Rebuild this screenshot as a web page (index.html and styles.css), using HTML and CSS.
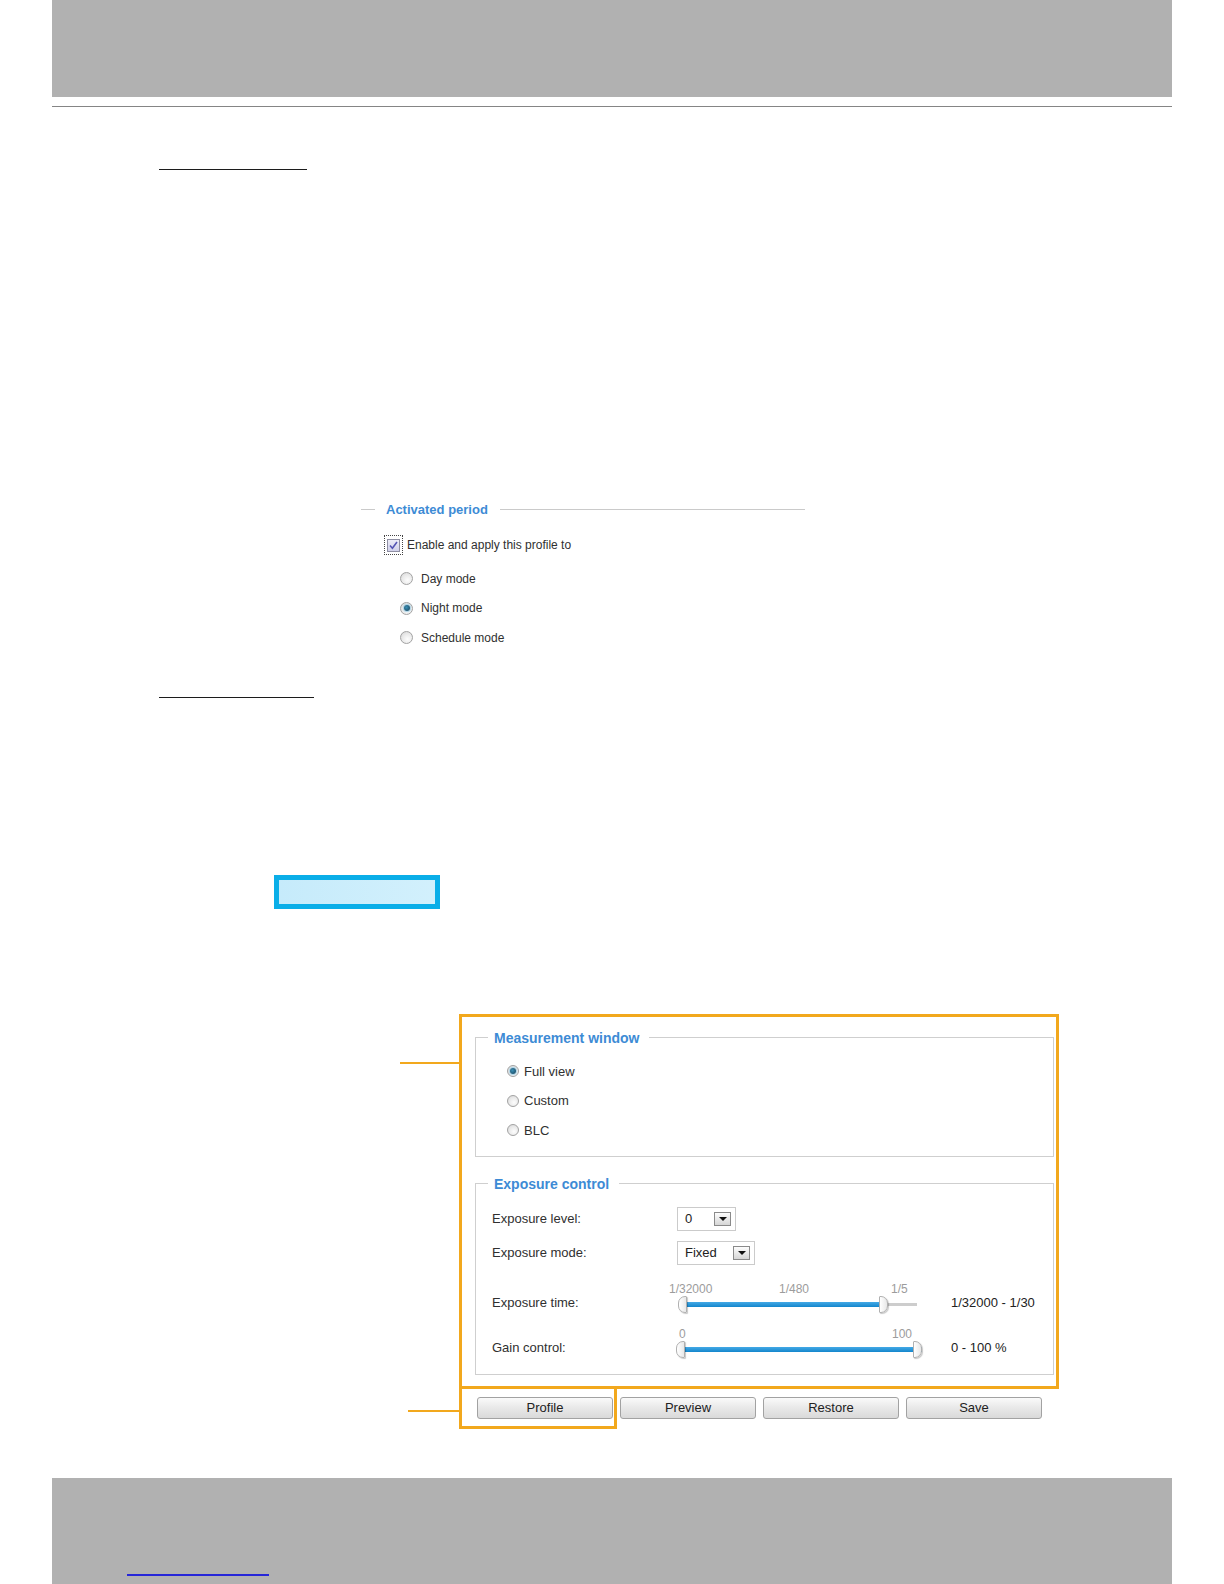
FILE: index.html
```html
<!DOCTYPE html>
<html lang="en">
<head>
    <meta charset="UTF-8">
    <title>Image Settings - Profile</title>
    <link rel="stylesheet" href="styles.css">
</head>
<body>
    <header class="page-head"></header>
    <div class="head-rule"></div>

    <div class="sec-line sec-line-a"></div>

    <section class="period">
        <div class="period-head"><span>Activated period</span></div>
        <div class="check-row">
            <span class="focus"><span class="check"><svg width="11" height="11" viewBox="0 0 11 11"><path d="M2 5.5 L4.4 8.2 L9 2" fill="none" stroke="#5454b4" stroke-width="1.6"/></svg></span></span>
            Enable and apply this profile to
        </div>
        <div class="opt"><span class="radio"></span>Day mode</div>
        <div class="opt"><span class="radio on"></span>Night mode</div>
        <div class="opt"><span class="radio"></span>Schedule mode</div>
    </section>

    <div class="sec-line sec-line-b"></div>

    <div class="note-box"></div>

    <div class="figure">
        <div class="panel">
            <div class="fs fs-window">
                <div class="fs-head"><span>Measurement window</span></div>
                <div class="fs-body">
                    <div class="opt"><span class="radio on"></span>Full view</div>
                    <div class="opt"><span class="radio"></span>Custom</div>
                    <div class="opt"><span class="radio"></span>BLC</div>
                </div>
            </div>
            <div class="fs fs-exposure">
                <div class="fs-head"><span>Exposure control</span></div>
                <div class="fs-body">
                    <div class="row row-level">
                        <span class="row-label">Exposure level:</span>
                        <span class="select select-level">0<span class="select-arrow"></span></span>
                    </div>
                    <div class="row row-mode">
                        <span class="row-label">Exposure mode:</span>
                        <span class="select select-mode">Fixed<span class="select-arrow"></span></span>
                    </div>
                    <div class="row row-slide row-time">
                        <span class="row-label">Exposure time:</span>
                        <div class="slider">
                            <div class="ticks">
                                <span style="left:0">1/32000</span>
                                <span style="left:110px">1/480</span>
                                <span style="left:222px">1/5</span>
                            </div>
                            <div class="rail">
                                <span class="rail-rest" style="left:212px;width:36px"></span>
                                <span class="rail-fill" style="left:13px;width:199px"></span>
                                <span class="handle handle-l" style="left:9px"></span>
                                <span class="handle handle-r" style="left:210px"></span>
                            </div>
                        </div>
                        <span class="row-value">1/32000 - 1/30</span>
                    </div>
                    <div class="row row-slide row-gain">
                        <span class="row-label">Gain control:</span>
                        <div class="slider">
                            <div class="ticks">
                                <span style="left:10px">0</span>
                                <span style="left:223px">100</span>
                            </div>
                            <div class="rail">
                                <span class="rail-fill" style="left:11px;width:242px"></span>
                                <span class="handle handle-l" style="left:7px"></span>
                                <span class="handle handle-r" style="left:244px"></span>
                            </div>
                        </div>
                        <span class="row-value">0 - 100 %</span>
                    </div>
                </div>
            </div>
        </div>
        <div class="btn-row">
            <div class="profile-mark"><button class="btn">Profile</button></div>
            <button class="btn btn-first">Preview</button>
            <button class="btn">Restore</button>
            <button class="btn">Save</button>
        </div>
    </div>

    <footer class="page-foot"><span class="foot-link"></span></footer>
</body>
</html>
```

FILE: styles.css
```css
body {
    margin: 0;
    background: #fff;
    color: #303030;
    font-family: 'Liberation Sans', Arial, sans-serif;
    font-size: 13px;
}
.page-head {
    height: 97px;
    margin: 0 52px;
    background: #b1b1b1;
}
.head-rule {
    height: 1px;
    margin: 9px 52px 0;
    background: #858585;
}
.sec-line {
    height: 0;
    margin-left: 159px;
    border-top: 1px solid #1c1c1c;
}
.sec-line-a {
    width: 148px;
    margin-top: 62px;
}
.sec-line-b {
    width: 155px;
    margin-top: 44px;
}

/* activated period */
.period {
    width: 444px;
    margin: 331px 0 0 361px;
    font-size: 12px;
}
.period-head {
    display: flex;
    align-items: center;
    height: 16px;
}
.period-head::before {
    content: '';
    width: 14px;
    height: 1px;
    background: #cacaca;
}
.period-head::after {
    content: '';
    flex: 1;
    height: 1px;
    background: #cacaca;
}
.period-head span {
    margin: 0 12px 0 11px;
    color: #3d8bd5;
    font-size: 13px;
    font-weight: bold;
}
.check-row {
    display: flex;
    align-items: center;
    height: 20px;
    margin: 18px 0 0 23px;
}
.focus {
    display: flex;
    align-items: center;
    justify-content: center;
    width: 17px;
    height: 18px;
    margin-right: 4px;
    border: 1px dotted #444;
}
.check {
    display: flex;
    align-items: center;
    justify-content: center;
    width: 11px;
    height: 11px;
    border: 1px solid #8e8ea2;
    background: linear-gradient(#ececf8, #d0d0ea);
}
.period .opt {
    height: 29.5px;
    margin-left: 39px;
}
.period .check-row + .opt {
    margin-top: 9px;
}
.period .radio {
    margin-right: 8px;
}
.opt {
    display: flex;
    align-items: center;
}
.radio {
    position: relative;
    box-sizing: border-box;
    width: 13px;
    height: 13px;
    border: 1px solid #a2a2a2;
    border-radius: 50%;
    background: radial-gradient(circle at 60% 65%, #fdfdfd 0, #e9e9e9 55%, #d2d2d2 100%);
}
.radio.on::after {
    content: '';
    position: absolute;
    left: 2.5px;
    top: 2.5px;
    width: 6px;
    height: 6px;
    border-radius: 50%;
    background: radial-gradient(circle at 40% 40%, #3b8fb5, #123f57);
    box-shadow: 0 0 1px 1px #a9d2e6;
}

.note-box {
    box-sizing: border-box;
    width: 166px;
    height: 34px;
    margin: 177px 0 0 274px;
    border: 5px solid #0aaee8;
    background: linear-gradient(90deg, #c6ebfb, #d2f0fc);
}

/* screenshot figure */
.figure {
    position: relative;
    width: 600px;
    margin: 105px 0 0 459px;
}
.figure::before,
.figure::after {
    content: '';
    position: absolute;
    height: 2px;
    background: #f2a81d;
}
.figure::before {
    left: -59px;
    top: 48px;
    width: 59px;
}
.figure::after {
    left: -51px;
    top: 396px;
    width: 51px;
}
.panel {
    display: flex;
    flex-direction: column;
    padding: 21px 2px 11px 13px;
    border: 3px solid #f2a81d;
}
.fs {
    display: flex;
    flex-direction: column;
    border: 1px solid #cfcfcf;
    border-top: 0;
}
.fs-exposure {
    margin-top: 27px;
}
.fs-head {
    display: flex;
    align-items: center;
    height: 20px;
    margin: -10px -1px 0;
}
.fs-head::before {
    content: '';
    width: 13px;
    height: 1px;
    background: #cfcfcf;
}
.fs-head::after {
    content: '';
    flex: 1;
    height: 1px;
    background: #cfcfcf;
}
.fs-head span {
    margin: 0 10px 0 6px;
    color: #3d8bd5;
    font-size: 14px;
    font-weight: bold;
}
.fs-window .fs-body {
    padding: 9px 0 10.5px 31px;
}
.fs-window .opt {
    height: 29.5px;
}
.fs-window .radio {
    width: 12px;
    height: 12px;
    margin-right: 5px;
}
.fs-window .radio.on::after {
    left: 2px;
    top: 2px;
}
.fs-exposure .fs-body {
    padding: 13px 0 17px 16px;
}
.row {
    display: flex;
    align-items: center;
}
.row-label {
    width: 177px;
    flex: none;
}
.row-mode {
    margin-top: 10px;
}
.select {
    box-sizing: border-box;
    display: flex;
    align-items: center;
    justify-content: space-between;
    height: 24px;
    margin-left: 8px;
    padding: 0 4px 0 7px;
    border: 1px solid #cbcbcb;
    background: #fff;
    color: #222;
}
.select-level {
    width: 59px;
}
.select-mode {
    width: 78px;
}
.select-arrow {
    display: flex;
    align-items: center;
    justify-content: center;
    width: 15px;
    height: 12px;
    border: 1px solid #8a8a8a;
    background: linear-gradient(#fdfdfd, #d6d6d6);
}
.select-arrow::after {
    content: '';
    border-left: 4px solid transparent;
    border-right: 4px solid transparent;
    border-top: 4px solid #111;
}
.row-slide {
    align-items: flex-end;
}
.row-time {
    margin-top: 17px;
}
.row-gain {
    margin-top: 15px;
}
.row-slide .row-label,
.row-value {
    line-height: 16px;
    margin-bottom: 1px;
}
.row-value {
    margin-left: 27px;
    color: #222;
}
.slider {
    width: 255px;
}
.ticks {
    position: relative;
    height: 14px;
    color: #9c9c9c;
    font-size: 12px;
    line-height: 14px;
}
.ticks span {
    position: absolute;
    top: 0;
}
.rail {
    position: relative;
    height: 16px;
}
.rail-fill,
.rail-rest {
    position: absolute;
}
.rail-fill {
    top: 6px;
    height: 5px;
    background: linear-gradient(#43a9e6, #1486cc);
}
.rail-rest {
    top: 7px;
    height: 3px;
    background: #cdcdcd;
}
.handle {
    position: absolute;
    top: 0;
    box-sizing: border-box;
    width: 9px;
    height: 17px;
    border: 1px solid #b0b0b0;
    background: linear-gradient(90deg, #fff, #e8e8e8);
    box-shadow: 1px 1px 1px rgba(0, 0, 0, 0.22);
}
.handle-l {
    border-radius: 7px 1px 1px 7px;
}
.handle-r {
    border-radius: 1px 7px 7px 1px;
}

.btn-row {
    display: flex;
    align-items: flex-start;
}
.profile-mark {
    padding: 8px 1px 7px 15px;
    border: 3px solid #f2a81d;
    border-top: 0;
}
.btn {
    box-sizing: border-box;
    width: 136px;
    height: 22px;
    margin: 8px 0 0 7px;
    padding: 0;
    border: 1px solid #a2a2a2;
    border-radius: 3px;
    background: linear-gradient(#fafafa, #e8e8e8 50%, #d9d9d9);
    color: #222;
    font-family: 'Liberation Sans', Arial, sans-serif;
    font-size: 13px;
}
.profile-mark .btn {
    margin: 0;
}
.btn-row .btn-first {
    margin-left: 3px;
}

.page-foot {
    height: 108px;
    margin: 49px 52px 0;
    background: #b1b1b1;
    overflow: hidden;
}
.foot-link {
    display: block;
    width: 142px;
    height: 0;
    margin: 96px 0 0 75px;
    border-top: 2px solid #2626d8;
}
```
